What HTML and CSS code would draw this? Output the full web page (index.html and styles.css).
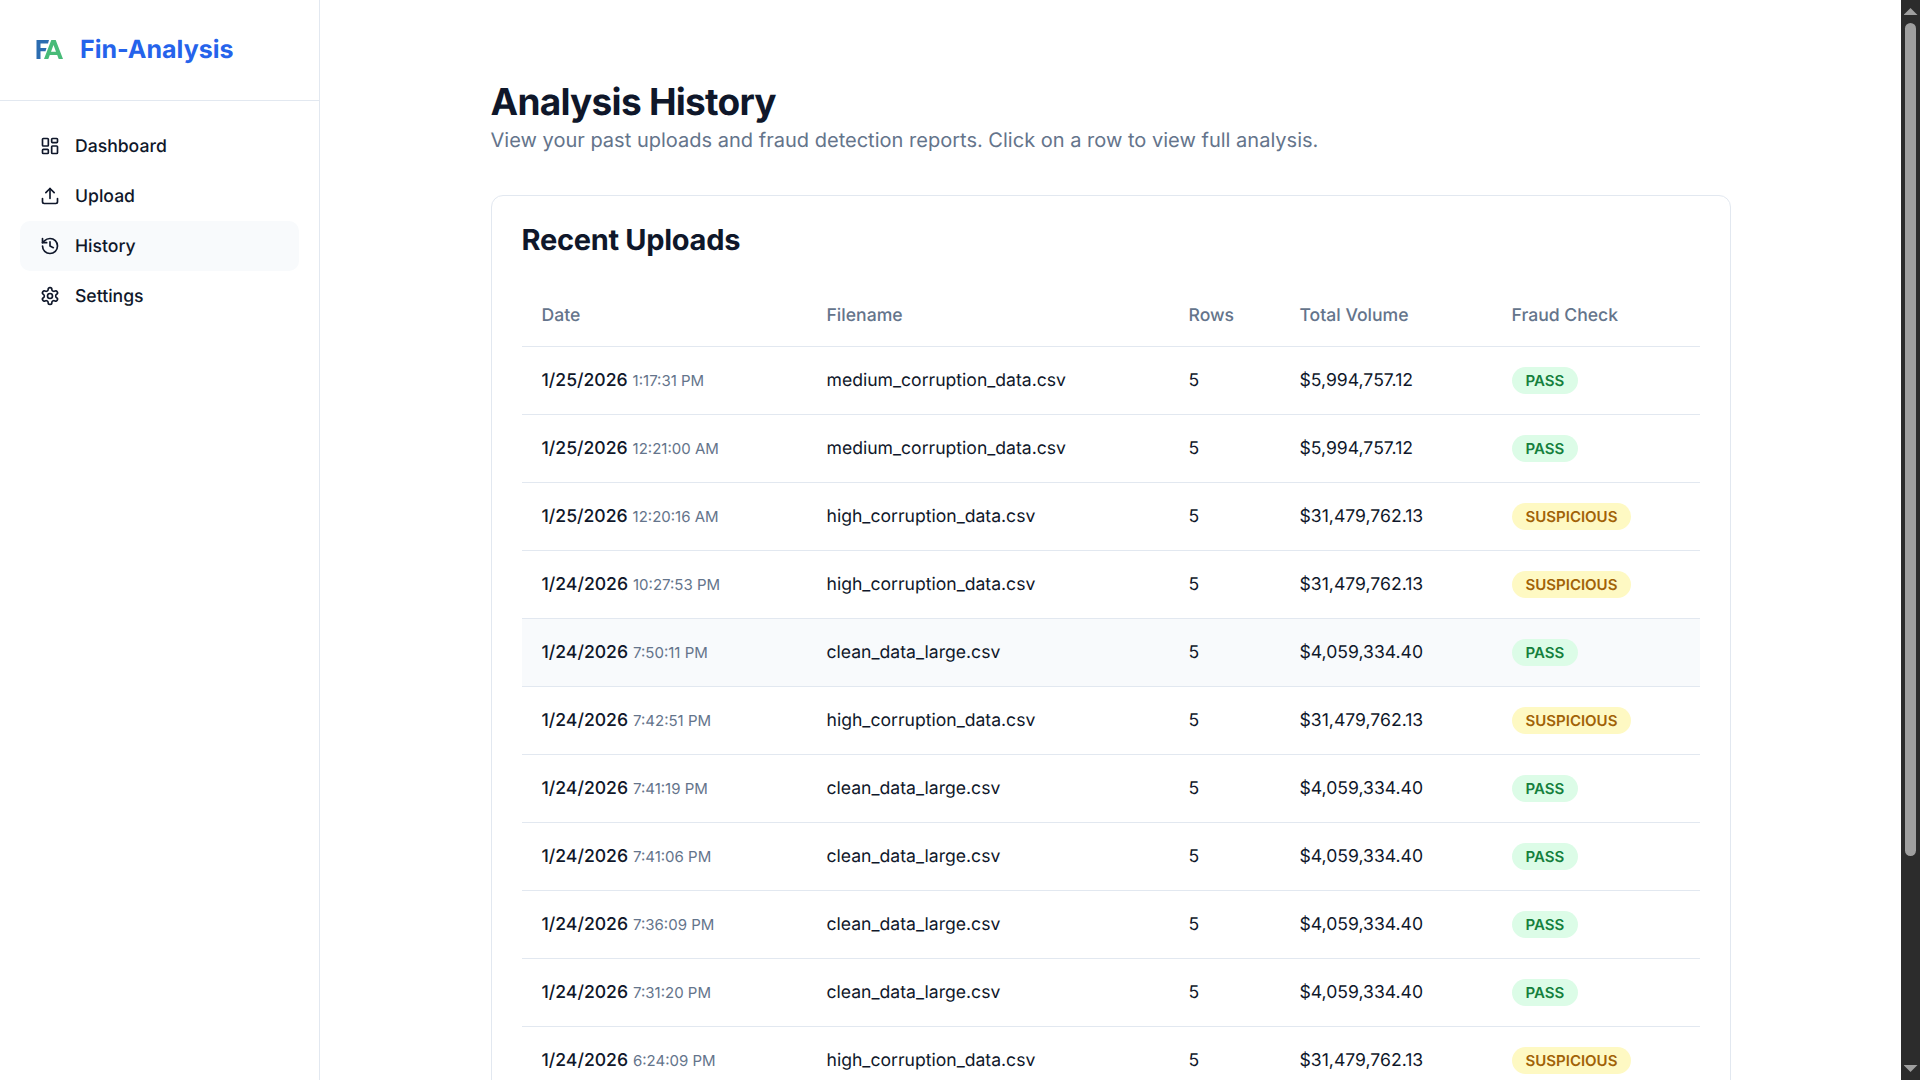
FILE: index.html
```html
<!DOCTYPE html>
<html lang="en">
<head>
<meta charset="utf-8">
<title>Fin-Analysis</title>
<link rel="stylesheet" href="styles.css">
</head>
<body>
<div class="app">
  <aside class="sidebar">
    <div class="brand">
      <svg class="logo" viewBox="0 0 27 19" aria-hidden="true"><path class="logo-f" d="M0.5 0h12.5l-1 3.4H4.5v4.6h6l-1 3.3h-5V19h-4z"/><path class="logo-a" d="M15.3 0h4.4L27 19h-4.3l-1.5-4h-7.4l-1.5 4H8zM17.5 5l-2.5 6.8h5z"/></svg>
      <span class="brand-name">Fin-Analysis</span>
    </div>
    <nav class="nav">
      <a class="nav-item"><svg class="icon" viewBox="0 0 24 24"><rect x="3" y="3" width="7" height="9" rx="1"/><rect x="14" y="3" width="7" height="5" rx="1"/><rect x="14" y="12" width="7" height="9" rx="1"/><rect x="3" y="16" width="7" height="5" rx="1"/></svg>Dashboard</a>
      <a class="nav-item"><svg class="icon" viewBox="0 0 24 24"><path d="M21 15v4a2 2 0 0 1-2 2H5a2 2 0 0 1-2-2v-4"/><path d="M17 8l-5-5-5 5"/><path d="M12 3v12"/></svg>Upload</a>
      <a class="nav-item active"><svg class="icon" viewBox="0 0 24 24"><path d="M3 12a9 9 0 1 0 9-9 9.75 9.75 0 0 0-6.74 2.74L3 8"/><path d="M3 3v5h5"/><path d="M12 7v5l4 2"/></svg>History</a>
      <a class="nav-item"><svg class="icon" viewBox="0 0 24 24"><path d="M12.22 2h-.44a2 2 0 0 0-2 2v.18a2 2 0 0 1-1 1.73l-.43.25a2 2 0 0 1-2 0l-.15-.08a2 2 0 0 0-2.73.73l-.22.38a2 2 0 0 0 .73 2.73l.15.1a2 2 0 0 1 1 1.72v.51a2 2 0 0 1-1 1.74l-.15.09a2 2 0 0 0-.73 2.73l.22.38a2 2 0 0 0 2.73.73l.15-.08a2 2 0 0 1 2 0l.43.25a2 2 0 0 1 1 1.73V20a2 2 0 0 0 2 2h.44a2 2 0 0 0 2-2v-.18a2 2 0 0 1 1-1.73l.43-.25a2 2 0 0 1 2 0l.15.08a2 2 0 0 0 2.73-.73l.22-.39a2 2 0 0 0-.73-2.73l-.15-.08a2 2 0 0 1-1-1.74v-.5a2 2 0 0 1 1-1.74l.15-.09a2 2 0 0 0 .73-2.73l-.22-.38a2 2 0 0 0-2.73-.73l-.15.08a2 2 0 0 1-2 0l-.43-.25a2 2 0 0 1-1-1.73V4a2 2 0 0 0-2-2z"/><circle cx="12" cy="12" r="3"/></svg>Settings</a>
    </nav>
  </aside>
  <main class="main">
    <div class="content">
      <h1 class="title">Analysis History</h1>
      <p class="subtitle">View your past uploads and fraud detection reports. Click on a row to view full analysis.</p>
      <section class="card">
        <h2 class="card-title">Recent Uploads</h2>
        <table class="table">
          <colgroup><col class="c-date"><col class="c-file"><col class="c-rows"><col class="c-vol"><col class="c-fraud"></colgroup>
          <thead><tr><th>Date</th><th>Filename</th><th>Rows</th><th>Total Volume</th><th>Fraud Check</th></tr></thead>
          <tbody>
            <tr><td><span class="date">1/25/2026</span> <span class="time">1:17:31 PM</span></td><td>medium_corruption_data.csv</td><td>5</td><td>$5,994,757.12</td><td><span class="badge pass">PASS</span></td></tr>
            <tr><td><span class="date">1/25/2026</span> <span class="time">12:21:00 AM</span></td><td>medium_corruption_data.csv</td><td>5</td><td>$5,994,757.12</td><td><span class="badge pass">PASS</span></td></tr>
            <tr><td><span class="date">1/25/2026</span> <span class="time">12:20:16 AM</span></td><td>high_corruption_data.csv</td><td>5</td><td>$31,479,762.13</td><td><span class="badge warn">SUSPICIOUS</span></td></tr>
            <tr><td><span class="date">1/24/2026</span> <span class="time">10:27:53 PM</span></td><td>high_corruption_data.csv</td><td>5</td><td>$31,479,762.13</td><td><span class="badge warn">SUSPICIOUS</span></td></tr>
            <tr class="hover"><td><span class="date">1/24/2026</span> <span class="time">7:50:11 PM</span></td><td>clean_data_large.csv</td><td>5</td><td>$4,059,334.40</td><td><span class="badge pass">PASS</span></td></tr>
            <tr><td><span class="date">1/24/2026</span> <span class="time">7:42:51 PM</span></td><td>high_corruption_data.csv</td><td>5</td><td>$31,479,762.13</td><td><span class="badge warn">SUSPICIOUS</span></td></tr>
            <tr><td><span class="date">1/24/2026</span> <span class="time">7:41:19 PM</span></td><td>clean_data_large.csv</td><td>5</td><td>$4,059,334.40</td><td><span class="badge pass">PASS</span></td></tr>
            <tr><td><span class="date">1/24/2026</span> <span class="time">7:41:06 PM</span></td><td>clean_data_large.csv</td><td>5</td><td>$4,059,334.40</td><td><span class="badge pass">PASS</span></td></tr>
            <tr><td><span class="date">1/24/2026</span> <span class="time">7:36:09 PM</span></td><td>clean_data_large.csv</td><td>5</td><td>$4,059,334.40</td><td><span class="badge pass">PASS</span></td></tr>
            <tr><td><span class="date">1/24/2026</span> <span class="time">7:31:20 PM</span></td><td>clean_data_large.csv</td><td>5</td><td>$4,059,334.40</td><td><span class="badge pass">PASS</span></td></tr>
            <tr><td><span class="date">1/24/2026</span> <span class="time">6:24:09 PM</span></td><td>high_corruption_data.csv</td><td>5</td><td>$31,479,762.13</td><td><span class="badge warn">SUSPICIOUS</span></td></tr>
          </tbody>
        </table>
      </section>
    </div>
  </main>
  <div class="scrollbar" aria-hidden="true">
    <span class="arrow up"></span>
    <span class="thumb"></span>
    <span class="arrow down"></span>
  </div>
</div>
</body>
</html>
```
FILE: styles.css
```css
* { box-sizing: border-box; }
html, body { margin: 0; padding: 0; }
body { font-family: Inter, "Liberation Sans", sans-serif; color: #0f172a; background: #fff; text-rendering: geometricPrecision; }
.app { display: flex; min-height: 100vh; padding-right: 19px; }
.sidebar { position: sticky; top: 0; align-self: flex-start; flex: none; width: 320px; height: 100vh; border-right: 1px solid #e2e8f0; background: #fff; }
.brand { display: flex; align-items: center; gap: 17px; height: 101px; padding-left: 36px; border-bottom: 1px solid #e2e8f0; }
.logo { flex: none; width: 27px; height: 19px; margin-top: -1px; }
.logo-f { fill: #2b6cb0; }
.logo-a { fill: #48bb78; }
.brand-name { font-size: 25px; font-weight: 700; color: #2563eb; }
.nav { display: flex; flex-direction: column; padding: 20px; }
.nav-item { display: flex; align-items: center; gap: 15px; height: 50px; padding-left: 20px; border-radius: 10px; font-size: 17.6px; font-weight: 500; color: #0f172a; }
.nav-item.active { background: #f8fafc; }
.icon { width: 20px; height: 20px; fill: none; stroke: currentColor; stroke-width: 2; stroke-linecap: round; stroke-linejoin: round; }
.main { flex: 1; min-width: 0; padding: 80px 20px 40px; }
.content { width: 1240px; margin: 0 auto; }
.title { margin: 0; font-size: 37px; font-weight: 700; line-height: 44px; letter-spacing: -0.02em; color: #0f172a; }
.subtitle { margin: 2px 0 41px; font-size: 20.05px; line-height: 28px; color: #64748b; }
.card { padding: 30px; border: 1px solid #e2e8f0; border-radius: 12px; background: #fff; }
.card-title { margin: -4px 0 20px; font-size: 29px; font-weight: 700; line-height: 36px; letter-spacing: -0.01em; color: #0f172a; }
.table { width: 100%; border-collapse: collapse; table-layout: fixed; font-size: 17.6px; }
.c-date { width: 285px; }
.c-file { width: 362px; }
.c-rows { width: 111px; }
.c-vol { width: 212px; }
th { height: 68px; padding: 8px 20px 0; text-align: left; font-weight: 500; color: #64748b; border-bottom: 1px solid #e2e8f0; }
td { height: 68px; padding: 0 20px; border-bottom: 1px solid #e2e8f0; white-space: nowrap; }
tr.hover td { background: #f8fafc; }
.date { font-weight: 450; }
.time { font-size: 15px; color: #64748b; }
.badge { display: inline-block; vertical-align: middle; padding: 0 14px; border-radius: 999px; font-size: 15px; font-weight: 600; line-height: 27px; }
.pass { background: #dcfce7; color: #15803d; }
.warn { background: #fef9c3; color: #a16207; }
.scrollbar { position: fixed; top: 0; right: 0; bottom: 0; width: 19px; display: flex; flex-direction: column; align-items: center; background: #2c2c2c; }
.arrow { flex: none; width: 14px; height: 7px; background: #9f9f9f; }
.arrow.up { margin-top: 8px; clip-path: polygon(50% 0, 100% 100%, 0 100%); }
.arrow.down { margin-top: 209px; clip-path: polygon(0 0, 100% 0, 50% 100%); }
.thumb { flex: none; width: 11px; height: 833px; margin-top: 8px; background: #9f9f9f; border-radius: 6px; }
```
